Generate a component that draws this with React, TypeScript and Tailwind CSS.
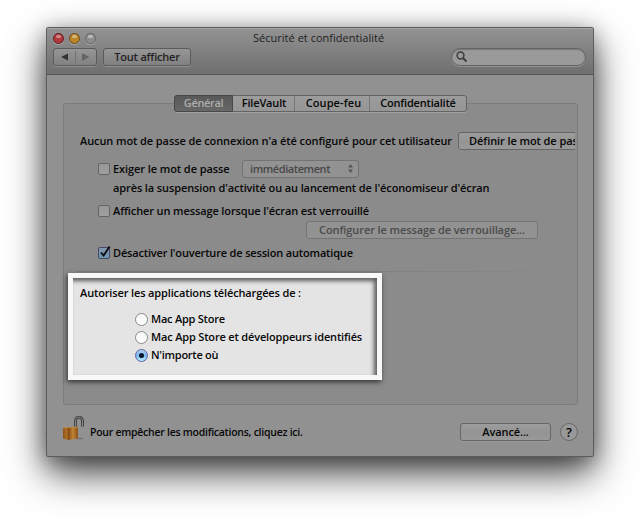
import React from "react";

const raised =
  "flex items-center justify-center rounded-[3px] border border-[#666] bg-linear-to-b from-[#9d9d9d] via-[#949494] to-[#999999] shadow-[0_1px_0_#9b9b9b]";

function Check({ checked = false }: { checked?: boolean }) {
  return (
    <span
      className={
        "relative block h-3 w-3 shrink-0 rounded-[2px] border " +
        (checked
          ? "border-[#484b68] bg-linear-to-b from-[#8397ad] to-[#6b94ae]"
          : "border-[#646464] bg-linear-to-b from-[#989898] to-[#9f9f9f]")
      }
    >
      {checked && (
        <svg className="absolute -left-px -top-[3px]" width="14" height="14" viewBox="0 0 14 14">
          <path d="M3 7.5 L5.6 10.5 L11.6 1.5" fill="none" stroke="#0c0c12" strokeWidth="1.9" />
        </svg>
      )}
    </span>
  );
}

function Radio({ label, checked = false, track }: { label: string; checked?: boolean; track: string }) {
  return (
    <div className="flex h-[18px] items-center">
      <span
        className={
          "mr-[3px] flex h-[13px] w-[13px] items-center justify-center rounded-full border " +
          (checked
            ? "border-[#5b62a0] bg-linear-to-b from-[#b5d3f3] via-[#77b6ef] to-[#b8efff]"
            : "border-[#8b8b8b] bg-linear-to-b from-[#f5f5f5] to-[#ffffff]")
        }
      >
        {checked && <span className="h-[5px] w-[5px] rounded-full bg-[#07142c]" />}
      </span>
      <span className={track}>{label}</span>
    </div>
  );
}

function Light({ tone }: { tone: string }) {
  return (
    <span className={"flex h-[11px] w-[11px] justify-center rounded-full border shadow-[0_1px_0_#a0a0a0] " + tone}>
      <span className="mt-px h-[3px] w-[5px] rounded-full bg-white/40" />
    </span>
  );
}

export default function App() {
  return (
    <div className="h-[521px] w-[640px] overflow-hidden bg-white pl-[46px] pt-[27px] font-['Open_Sans','Noto_Sans',sans-serif] text-[11px] font-[560] leading-[14px] whitespace-nowrap text-[#080808]">
      <div className="flex h-[430px] w-[548px] flex-col rounded-[2px] border border-[#5c5c5c] bg-[#919191] shadow-[0_16px_38px_rgba(0,0,0,0.72),0_4px_20px_rgba(0,0,0,0.3)]">
        <header className="h-[47px] shrink-0 rounded-t-[1px] border-b border-[#565656] bg-linear-to-b from-[#939393] to-[#6f6f6f] shadow-[inset_0_1px_0_#a6a6a6]">
          <div className="flex h-5 items-center pl-1.5">
            <div className="flex w-[200px] gap-[5px]">
              <Light tone="border-[#641d20] bg-[#b0373b]" />
              <Light tone="border-[#6b4a17] bg-[#bb8428]" />
              <Light tone="border-[#636363] bg-[#8d8d8d]" />
            </div>
            <h1 className="text-[11px] font-medium tracking-[0.02px] text-[#222]">Sécurité et confidentialité</h1>
          </div>
          <div className="flex h-[18px] pl-1.5 pr-[7px]">
            <div className="flex w-11 items-center rounded-[3px] border border-[#5b5b5b] bg-linear-to-b from-[#969696] to-[#818181] shadow-[0_1px_0_#929292]">
              <svg width="42" height="16" viewBox="0 0 42 16">
                <path d="M14 4.5 V11.5 L7 8Z" fill="#333" />
                <path d="M21.5 2 V14" stroke="#707070" />
                <path d="M28.5 4.8 V11.2 L34.5 8Z" fill="#666" stroke="#555" strokeWidth=".6" />
              </svg>
            </div>
            <button className="ml-1.5 w-[88px] rounded-[3px] border border-[#5b5b5b] bg-linear-to-b from-[#969696] to-[#818181] tracking-[-0.2px] text-[#222] shadow-[0_1px_0_#929292]">
              Tout afficher
            </button>
            <div className="ml-auto flex w-[135px] items-center rounded-full border border-[#646464] bg-[#9a9a9a] pl-1 shadow-[inset_0_1px_1px_#777,0_1px_0_#929292]">
              <svg width="12" height="12" viewBox="0 0 12 12" fill="none" stroke="#3d3d3d">
                <circle cx="4.5" cy="4.5" r="3.4" strokeWidth="1.5" />
                <path d="M7 7 L10.5 10.5" strokeWidth="2" />
              </svg>
            </div>
          </div>
        </header>

        <main className="px-4 pt-5">
          <nav className="relative z-10 ml-[111px] flex h-[17px] w-[293px] items-stretch rounded-[3px] border border-[#646464] bg-linear-to-b from-[#9c9c9c] to-[#969696] text-center shadow-[0_1px_0_#a0a0a0]">
            <span className="-my-px -ml-px w-[59px] rounded-l-[3px] border border-[#484848] bg-linear-to-b from-[#585858] to-[#686868] tracking-[-0.35px] text-[#adadad]">Général</span>
            <span className="w-[62px] border-r border-[#777] pl-px tracking-[-0.15px]">FileVault</span>
            <span className="w-[75px] border-r border-[#777] pl-[3px] tracking-[0.1px]">Coupe-feu</span>
            <span className="flex-1 tracking-[-0.2px]">Confidentialité</span>
          </nav>

          <section className="-mt-[9px] h-[302px] w-[515px] rounded-[3px] border border-[#7c7c7c] bg-[#8b8b8b] pt-[27px]">
            <div className="ml-4 flex h-[19px] w-[495px] items-center overflow-hidden">
              <span className="w-[378px] shrink-0 tracking-[-0.09px]">Aucun mot de passe de connexion n'a été configuré pour cet utilisateur</span>
              <button className={raised + " h-[18px] w-[150px] shrink-0 justify-start! pl-[10px] tracking-[-0.08px]"}>Définir le mot de passe</button>
            </div>
            <div className="ml-[34px] mt-[9px] flex h-[19px] items-center">
              <Check />
              <span className="ml-[3px] w-[129px] tracking-[-0.08px]">Exiger le mot de passe</span>
              <div className="flex h-[18px] w-[117px] items-center justify-between rounded-[3px] border border-[#737373] bg-[#929292] pl-[7px] pr-[5px] text-[#484848]">
                <span className="tracking-[-0.42px]">immédiatement</span>
                <svg width="5" height="9" viewBox="0 0 5 9" fill="#555">
                  <path d="M0 3.5 L2.5 0 L5 3.5Z M0 5.5 H5 L2.5 9Z" />
                </svg>
              </div>
            </div>
            <p className="ml-[49px] mt-[3px] h-[14px] tracking-[-0.11px]">après la suspension d'activité ou au lancement de l'économiseur d'écran</p>
            <div className="ml-[34px] mt-[9px] flex h-[14px] items-center">
              <Check />
              <span className="ml-[3px] tracking-[-0.12px]">Afficher un message lorsque l'écran est verrouillé</span>
            </div>
            <div className="ml-[242px] mt-[3px] flex h-[18px] w-[232px] items-center justify-center rounded-[3px] border border-[#747474] bg-[#929292] tracking-[-0.09px] text-[#4b4b4b]">
              Configurer le message de verrouillage...
            </div>
            <div className="ml-[34px] mt-[7px] flex h-[14px] items-center">
              <Check checked />
              <span className="ml-[3px] tracking-[-0.17px]">Désactiver l'ouverture de session automatique</span>
            </div>
            <div className="ml-3 mt-[11px] h-px bg-linear-to-r from-[#7d7d7d] via-[#7d7d7d] to-[#8b8b8b]" />
            <div className="ml-[4px] mt-px h-[107px] w-[314px] border-[5px] border-[#f8f8f8] bg-[#e4e4e4] pl-[7px] pt-2 shadow-[-1px_2px_5px_rgba(0,0,0,0.65),inset_-3px_3px_4px_rgba(0,0,0,0.6)]">
              <p className="tracking-[-0.14px]">Autoriser les applications téléchargées de :</p>
              <div className="ml-[55px] mt-[10px]">
                <Radio label="Mac App Store" track="tracking-[-0.24px]" />
                <Radio label="Mac App Store et développeurs identifiés" track="tracking-[-0.17px]" />
                <Radio label="N'importe où" track="tracking-[-0.26px]" checked />
              </div>
            </div>
          </section>

          <footer className="mt-[10px] flex h-[34px] items-center">
            <svg className="-mt-[7px]" width="24" height="26" viewBox="0 0 24 26">
              <defs>
                <linearGradient id="brass">
                  <stop stopColor="#8d5117" />
                  <stop offset=".28" stopColor="#b27428" />
                  <stop offset=".34" stopColor="#7d4313" />
                  <stop offset=".65" stopColor="#c18332" />
                  <stop offset="1" stopColor="#8d5019" />
                </linearGradient>
              </defs>
              <path d="M13 22.5 H20" stroke="#737373" strokeWidth="1.5" />
              <path d="M12.5 11 V5.5 C12.5 -.2 19.5 -.2 19.5 5.5 V10.5" fill="none" stroke="#444" strokeWidth="3" />
              <path d="M12.5 11 V5.5 C12.5 -.2 19.5 -.2 19.5 5.5 V10.5" fill="none" stroke="#8b8b8b" strokeWidth="1" />
              <path d="M0 12 L5 11 H15 V22.5 L5 24 L0 22.5Z" fill="url(#brass)" />
              <path d="M0 12 L5 11.3 H15" fill="none" stroke="#ba8a4d" />
            </svg>
            <span className="ml-[3px] text-[10.5px] tracking-[-0.26px]">Pour empêcher les modifications, cliquez ici.</span>
            <button className={raised + " ml-auto h-[18px] w-[91px] tracking-[-0.1px]"}>Avancé...</button>
            <button className="ml-[9px] mr-[-1px] flex h-[18px] w-[18px] items-center justify-center rounded-full border border-[#686868] bg-[#999] text-[13px] font-semibold">?</button>
          </footer>
        </main>
      </div>
    </div>
  );
}
